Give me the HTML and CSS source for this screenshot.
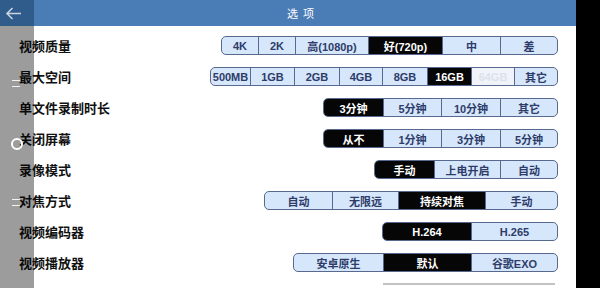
FILE: index.html
```html
<!DOCTYPE html>
<html>
<head>
  <title>选项</title>
  <link rel="stylesheet" href="styles.css">
</head>
<body>
  <div class="screen">
    <div class="app">
      <div class="topbar"><span class="title">选 项</span></div>

      <div class="list">
        <div class="row">
          <span class="label">视频质量</span>
          <div class="group">
            <span class="seg w36">4K</span>
            <span class="seg w37">2K</span>
            <span class="seg w73">高(1080p)</span>
            <span class="seg w74 on">好(720p)</span>
            <span class="seg w58">中</span>
            <span class="seg w57">差</span>
          </div>
        </div>

        <div class="row">
          <span class="label">最大空间</span>
          <div class="group">
            <span class="seg w39">500MB</span>
            <span class="seg w44">1GB</span>
            <span class="seg w45">2GB</span>
            <span class="seg w43">4GB</span>
            <span class="seg w45">8GB</span>
            <span class="seg w44 on">16GB</span>
            <span class="seg w43 off">64GB</span>
            <span class="seg w43">其它</span>
          </div>
        </div>

        <div class="row">
          <span class="label">单文件录制时长</span>
          <div class="group">
            <span class="seg w59 on">3分钟</span>
            <span class="seg w58">5分钟</span>
            <span class="seg w59">10分钟</span>
            <span class="seg w57">其它</span>
          </div>
        </div>

        <div class="row">
          <span class="label">关闭屏幕</span>
          <div class="group">
            <span class="seg w59 on">从不</span>
            <span class="seg w58">1分钟</span>
            <span class="seg w59">3分钟</span>
            <span class="seg w57">5分钟</span>
          </div>
        </div>

        <div class="row">
          <span class="label">录像模式</span>
          <div class="group">
            <span class="seg w59 on">手动</span>
            <span class="seg w66">上电开启</span>
            <span class="seg w57">自动</span>
          </div>
        </div>

        <div class="row">
          <span class="label">对焦方式</span>
          <div class="group">
            <span class="seg w67">自动</span>
            <span class="seg w66">无限远</span>
            <span class="seg w87 on">持续对焦</span>
            <span class="seg w72">手动</span>
          </div>
        </div>

        <div class="row">
          <span class="label">视频编码器</span>
          <div class="group">
            <span class="seg w88 on">H.264</span>
            <span class="seg w86">H.265</span>
          </div>
        </div>

        <div class="row">
          <span class="label">视频播放器</span>
          <div class="group">
            <span class="seg w89">安卓原生</span>
            <span class="seg w88 on">默认</span>
            <span class="seg w86">谷歌EXO</span>
          </div>
        </div>

        <div class="rule"></div>
      </div>
    </div>

    <div class="edge"></div>

    <!-- half-open side drawer laid over the page -->
    <div class="drawer">
      <svg class="back" width="34" height="26" viewBox="0 0 34 26">
        <path d="M21 13.5H7M12.5 8L7 13.5l5.5 5.5" fill="none" stroke="#c9d3e1" stroke-width="1.6"/>
      </svg>
      <span class="mark dash-a"></span>
      <span class="mark ring"></span>
      <span class="mark dash-b"></span>
    </div>
  </div>
</body>
</html>
```

FILE: styles.css
```css
/* Global styles */
body {
  margin: 0;
  padding: 0;
  font-family: "Liberation Sans", "Noto Sans CJK SC", sans-serif;
}

.screen {
  position: relative;
  display: flex;
  width: 600px;
  height: 288px;
  overflow: hidden;
}

.app {
  flex: 1;
  background-color: #fff;
}

.edge {
  width: 24px;
  background-color: #000;
}

/* Title bar */
.topbar {
  height: 26px;
  background-color: #4a7cb6;
  color: #fff;
  display: flex;
  align-items: center;
  justify-content: center;
  padding-left: 26px;
}

.title {
  font-size: 11px;
  letter-spacing: 1px;
}

/* Setting rows */
.list {
  padding-top: 4px;
}

.row {
  height: 31px;
  display: flex;
  align-items: center;
  justify-content: space-between;
  padding: 0 18px 0 19px;
}

.label {
  font-size: 13px;
  font-weight: bold;
  color: #111;
}

.group {
  display: flex;
  height: 19px;
  box-sizing: border-box;
  border: 1px solid #58698f;
  border-radius: 5px;
  overflow: hidden;
  background-color: #d6e6fb;
}

.seg {
  display: flex;
  align-items: center;
  justify-content: center;
  box-sizing: border-box;
  font-size: 11px;
  font-weight: bold;
  color: #2d3c69;
  border-left: 1px solid #58698f;
  white-space: nowrap;
}

.seg:first-child {
  border-left: none;
}

.seg.on {
  background-color: #060606;
  color: #fff;
}

.seg.off {
  background-color: #f0f4fa;
  color: #dde2ea;
}

.w36 { width: 36px; }
.w37 { width: 37px; }
.w39 { width: 39px; }
.w43 { width: 43px; }
.w44 { width: 44px; }
.w45 { width: 45px; }
.w57 { width: 57px; }
.w58 { width: 58px; }
.w59 { width: 59px; }
.w66 { width: 66px; }
.w67 { width: 67px; }
.w72 { width: 72px; }
.w73 { width: 73px; }
.w74 { width: 74px; }
.w86 { width: 86px; }
.w87 { width: 87px; }
.w88 { width: 88px; }
.w89 { width: 89px; }

/* top edge of the next, cut-off control */
.rule {
  width: 172px;
  height: 2px;
  margin: 5px 21px 0 auto;
  background-color: #c2c2c2;
}

/* Drawer edge */
.drawer {
  position: absolute;
  top: 0;
  left: 0;
  width: 34px;
  height: 288px;
  background-color: rgba(0, 0, 0, 0.39);
}

.back {
  display: block;
  background-color: #305c8b;
}

.mark {
  position: absolute;
}

.ring {
  left: 11px;
  top: 138px;
  width: 8px;
  height: 8px;
  border: 2px solid #fff;
  border-radius: 50%;
}

.dash-a,
.dash-b {
  left: 12px;
  width: 8px;
  height: 5px;
  border-top: 1.5px solid #f2f2f2;
  border-bottom: 1.5px solid #f2f2f2;
}

.dash-a {
  top: 80px;
}

.dash-b {
  top: 199px;
}
```
